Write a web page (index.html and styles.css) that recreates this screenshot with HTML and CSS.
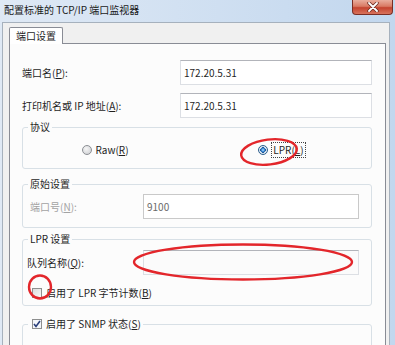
FILE: index.html
```html
<!DOCTYPE html>
<html lang="zh-CN">
<head>
    <meta charset="UTF-8">
    <title>配置标准的 TCP/IP 端口监视器</title>
    <link rel="stylesheet" href="styles.css">
</head>
<body>
    <div class="window">
        <div class="titlebar">
            <span class="title">配置标准的 TCP/IP 端口监视器</span>
            <span class="close">
                <svg width="12" height="10" viewBox="0 0 12 10">
                    <path d="M2 1 L10 9 M10 1 L2 9" stroke="#6b2a20" stroke-width="3.4" stroke-linecap="round"/>
                    <path d="M2 1 L10 9 M10 1 L2 9" stroke="#fff" stroke-width="1.8" stroke-linecap="round"/>
                </svg>
            </span>
        </div>

        <div class="client">
            <div class="tabs">
                <div class="tab">端口设置</div>
            </div>
            <div class="panel">
                <div class="row">
                    <label>端口名(<u>P</u>):</label>
                    <div class="input wide">172.20.5.31</div>
                </div>
                <div class="row">
                    <label>打印机名或 IP 地址(<u>A</u>):</label>
                    <div class="input wide">172.20.5.31</div>
                </div>

                <fieldset class="group proto">
                    <legend>协议</legend>
                    <div class="choices">
                        <span class="option"><span class="radio"></span><span>Raw(<u>R</u>)</span></span>
                        <span class="option"><span class="radio on"></span><span class="focus">LPR(<u>L</u>)</span></span>
                    </div>
                </fieldset>

                <fieldset class="group raw">
                    <legend>原始设置</legend>
                    <div class="row inner disabled">
                        <label>端口号(<u>N</u>):</label>
                        <div class="input narrow">9100</div>
                    </div>
                </fieldset>

                <fieldset class="group lpr">
                    <legend>LPR 设置</legend>
                    <div class="row inner">
                        <label class="queue">队列名称(<u>Q</u>):</label>
                        <div class="input narrow empty"></div>
                    </div>
                    <div class="option checkrow"><span class="check"></span><span>启用了 LPR 字节计数(<u>B</u>)</span></div>
                </fieldset>

                <fieldset class="group snmp">
                    <legend><span class="option"><span class="check">
                        <svg width="8" height="8" viewBox="0 0 8 8"><path d="M1 4 L3 6.5 L7 1" fill="none" stroke="#2a3f7a" stroke-width="1.6"/></svg>
                    </span><span>启用了 SNMP 状态(<u>S</u>)</span></span></legend>
                    <div class="filler"></div>
                </fieldset>
            </div>
        </div>

        <svg class="marks" width="395" height="345" viewBox="0 0 395 345">
            <ellipse cx="269" cy="152" rx="28" ry="12.5" transform="rotate(-7 269 152)"/>
            <ellipse cx="243" cy="262" rx="109" ry="17.5"/>
            <ellipse cx="40" cy="287" rx="11" ry="11.5"/>
        </svg>
    </div>
</body>
</html>
```

FILE: styles.css
```css
body {
    margin: 0;
    width: 395px;
    height: 345px;
    overflow: hidden;
    background: linear-gradient(to right, #dfe9f5, #c2d7ee);
    font-family: "Noto Sans CJK SC", "Noto Sans", sans-serif;
    font-size: 10px;
    color: #1f1f1f;
}
.window {
    position: relative;
    height: 100%;
    overflow: hidden;
}
.titlebar {
    height: 22px;
    display: flex;
    justify-content: space-between;
    align-items: flex-start;
}
.title {
    margin: 3px 0 0 4px;
    line-height: 14px;
    color: #1a1a1a;
}
.close {
    width: 39px;
    height: 14px;
    margin-right: 2px;
    border: 1px solid #7a2e25;
    border-top: none;
    border-radius: 0 0 4px 4px;
    background: linear-gradient(#e9ad9d, #d97a64 45%, #c4432f 55%, #d8735c);
    display: flex;
    align-items: center;
    justify-content: center;
}
.client {
    box-sizing: border-box;
    height: 323px;
    overflow: hidden;
    margin: 0 5px 0 2px;
    padding: 4px 3px 0 6px;
    background: #f0f0f0;
    border: 1px solid #a6b1bd;
    border-bottom: none;
}
.tabs {
    display: flex;
}
.tab {
    height: 16px;
    padding: 0 6px;
    line-height: 16px;
    background: #fff;
    border: 1px solid #898c95;
    border-bottom: none;
    border-radius: 2px 2px 0 0;
    margin-bottom: -1px;
    position: relative;
    z-index: 1;
}
.panel {
    height: 320px;
    padding: 16px 13px 0 12px;
    background: #fcfcfc;
    border: 1px solid #898c95;
}
.row {
    display: flex;
    align-items: center;
    justify-content: space-between;
    height: 25px;
}
.row + .row {
    margin-top: 8px;
}
.input {
    box-sizing: border-box;
    height: 25px;
    padding: 0 3px;
    line-height: 23px;
    background: #fff;
    border: 1px solid #dcdfe4;
    border-top-color: #b2b4ba;
}
.wide {
    width: 192px;
}
.narrow {
    width: 216px;
    margin-right: 7px;
}
.empty {
    background: #fbfbfb;
}
.group {
    margin: 0;
    padding: 0 5px;
    min-width: 0;
    border: 1px solid #d8e0e6;
    border-radius: 3px;
}
legend {
    padding: 0 2px;
    line-height: 14px;
}
.proto {
    margin-top: 2px;
}
.raw {
    margin-top: 8px;
}
.lpr {
    margin-top: 4px;
}
.snmp {
    margin-top: 11px;
}
.choices {
    display: grid;
    grid-template-columns: 1fr 1fr;
    justify-items: center;
    height: 14px;
    margin: 9px 0 11px;
}
.option {
    display: inline-flex;
    align-items: center;
    gap: 3px;
    line-height: 14px;
}
.choices .option:first-child {
    margin-left: -14px;
}
.radio {
    box-sizing: border-box;
    width: 10px;
    height: 10px;
    border-radius: 50%;
    border: 1px solid #8c8f94;
    background: radial-gradient(circle at 40% 35%, #f6f6f6, #c9cbcf);
}
.radio.on {
    border-color: #2d5f8c;
    background: radial-gradient(circle, #bfe3ff 0, #3d8ad4 28%, #1c4f8c 48%, #e4eef8 52%, #cfdbe8);
}
.focus {
    padding: 0 1px;
    outline: 1px dotted #444;
    margin-left: 1px;
}
.raw .row {
    margin: 3px 0 8px;
    padding-left: 2px;
}
.disabled label {
    color: #a3a3a3;
}
.disabled .input {
    color: #6a6a6a;
    border-color: #c9c9c9;
}
.lpr .row {
    margin-top: 4px;
}
.queue {
    margin-left: -1px;
}
.checkrow {
    display: flex;
    margin: 12px 0 7px 4px;
    height: 11px;
}
.check {
    box-sizing: border-box;
    width: 10px;
    height: 10px;
    border: 1px solid #8e8f8f;
    background: linear-gradient(135deg, #dcdcdc, #f8f8f8);
    display: flex;
    align-items: center;
    justify-content: center;
    margin-right: 1px;
}
.snmp legend .check {
    margin-left: 2px;
    background: #f4f6fa;
}
.filler {
    height: 40px;
}
.marks {
    position: absolute;
    top: 0;
    left: 0;
    pointer-events: none;
}
.marks ellipse {
    fill: none;
    stroke: #e3262b;
    stroke-width: 2.4;
}
```
